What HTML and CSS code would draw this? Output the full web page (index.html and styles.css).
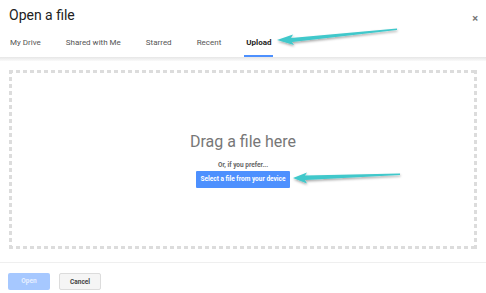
FILE: index.html
```html
<!DOCTYPE html>
<html>
<head>
<meta charset="utf-8">
<link rel="stylesheet" href="styles.css">
</head>
<body>
<div class="dialog">
  <div class="header">
    <div class="title">Open a file</div>
    <div class="close">×</div>
  </div>
  <div class="tabs">
    <div class="tab">My Drive</div>
    <div class="tab">Shared with Me</div>
    <div class="tab">Starred</div>
    <div class="tab">Recent</div>
    <div class="tab active">Upload</div>
  </div>
  <div class="shadow"></div>
  <div class="content">
    <div class="dropzone">
      <div class="drag">Drag a file here</div>
      <div class="prefer">Or, if you prefer...</div>
      <div class="select">Select a file from your device</div>
    </div>
  </div>
  <div class="footer">
    <div class="btn open">Open</div>
    <div class="btn cancel">Cancel</div>
  </div>
  <svg class="arrows" width="486" height="293" viewBox="0 0 486 293">
    <defs>
      <filter id="sh" x="-10%" y="-50%" width="120%" height="200%">
        <feDropShadow dx="0.5" dy="1.5" stdDeviation="1" flood-color="#000" flood-opacity="0.35"/>
      </filter>
    </defs>
    <polygon filter="url(#sh)" fill="#40c8cb" points="277,40 293,34.5 291,38 397,28.5 397,30 292,42 294,45"/>
    <polygon filter="url(#sh)" fill="#40c8cb" points="293,178 307,172.5 305,175.5 400,173.5 400,175 305,180 307,183.5"/>
  </svg>
</div>
</body>
</html>
```
FILE: styles.css
```css
* { box-sizing: border-box; }
html, body { margin: 0; padding: 0; }
body {
  width: 486px;
  height: 293px;
  background: #fff;
  font-family: Roboto, "Liberation Sans", Arial, sans-serif;
  overflow: hidden;
}
.dialog {
  position: relative;
  width: 486px;
  height: 293px;
  display: flex;
  flex-direction: column;
}
.header {
  display: flex;
  justify-content: space-between;
  align-items: flex-start;
  padding: 6px 8px 0 9px;
  height: 34px;
}
.title {
  font-size: 14px;
  line-height: 18px;
  color: #222;
}
.close {
  font-size: 11px;
  line-height: 14px;
  color: #777;
  margin-top: 6px;
  font-weight: bold;
}
.tabs {
  display: flex;
  padding-left: 10px;
  height: 23px;
}
.tab {
  font-size: 8px;
  line-height: 16px;
  color: #555;
  padding-top: 1px;
  margin-right: 25px;
  height: 23px;
}
.tab.active {
  font-weight: bold;
  color: #222;
  padding: 1px 2px 0 2px;
  margin-left: -2px;
  border-bottom: 2px solid #4d90fe;
}
.shadow {
  height: 4px;
  background: linear-gradient(#e6e6e6, #fafafa);
}
.content {
  padding: 9px 9px 13px 9px;
}
.dropzone {
  height: 179px;
  display: flex;
  flex-direction: column;
  align-items: center;
  padding-top: 62px;
  background:
    repeating-linear-gradient(90deg, #dcdcdc 0 4px, transparent 4px 7px) left top / 100% 3px no-repeat,
    repeating-linear-gradient(90deg, #dcdcdc 0 4px, transparent 4px 7px) left bottom / 100% 3px no-repeat,
    repeating-linear-gradient(180deg, #dcdcdc 0 4px, transparent 4px 7px) left top / 3px 100% no-repeat,
    repeating-linear-gradient(180deg, #dcdcdc 0 4px, transparent 4px 7px) right top / 3px 100% no-repeat;
}
.drag {
  font-size: 16px;
  line-height: 20px;
  color: #777;
}
.prefer {
  margin-top: 9px;
  font-size: 6.5px;
  line-height: 9px;
  font-weight: bold;
  color: #666;
}
.select {
  margin-top: 1px;
  background: #4d90fe;
  color: #fff;
  font-size: 6.5px;
  font-weight: bold;
  height: 17px;
  line-height: 17px;
  padding: 0 5px;
  border-radius: 1px;
}
.footer {
  border-top: 1px solid #efefef;
  display: flex;
  gap: 9px;
  padding: 10px 8px 0 8px;
  flex: 1;
}
.btn {
  height: 17px;
  width: 42px;
  line-height: 16px;
  font-size: 6.5px;
  font-weight: bold;
  text-align: center;
  border-radius: 2px;
}
.open {
  background: #a6c8ff;
  color: #e8f0ff;
}
.cancel {
  background: #f5f5f5;
  border: 1px solid #dcdcdc;
  color: #444;
}
.arrows {
  position: absolute;
  left: 0;
  top: 0;
  pointer-events: none;
}
```
